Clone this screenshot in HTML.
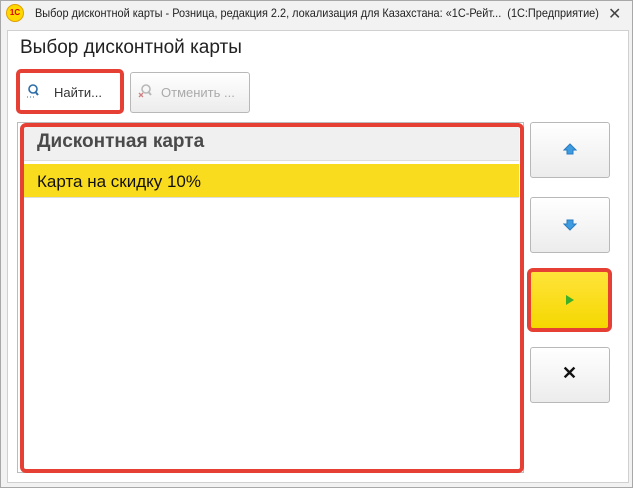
<!DOCTYPE html><html><head><style>
body{margin:0;width:637px;height:489px;background:#fff;position:relative;overflow:hidden;font-family:"Liberation Sans",sans-serif}
.a{position:absolute;box-sizing:border-box;white-space:nowrap}
.btn{background:linear-gradient(#fff,#ececec);border:1px solid #b8b8b8;border-radius:3px}
</style></head><body>
<div class="a" style="left:0;top:0;width:633px;height:488px;background:#f2f2f2;border:1px solid #a8a8a8"></div>
<div class="a" style="left:7px;top:30px;width:622px;height:453px;background:#fff;border:1px solid #d0d0d0"></div>
<div class="a" style="left:6px;top:4px;width:18px;height:18px;border-radius:50%;background:#ffd800;border:1px solid #e0a000;font-size:8px;color:#d00;font-weight:bold;text-align:center;line-height:16px">1С</div>
<div class="a" style="left:35px;top:6px;font-size:12px;color:#222;transform:scaleX(0.91);transform-origin:0 0">Выбор дисконтной карты - Розница, редакция 2.2, локализация для Казахстана: «1С-Рейт...&nbsp; (1С:Предприятие)</div>
<div class="a" style="left:608px;top:4px;font-size:16px;color:#444">✕</div>
<div class="a" style="left:20px;top:37px;font-size:19px;color:#222">Выбор дисконтной карты</div>
<div class="a" style="left:16px;top:69px;width:108px;height:45px;border:4px solid #e64035;border-radius:5px;background:#fff"></div>
<svg class="a" style="left:26px;top:83px" width="14" height="16"><circle cx="7" cy="6" r="4" fill="none" stroke="#2c6da8" stroke-width="1.6"/><path d="M9.5 9L12 12" stroke="#2c6da8" stroke-width="2"/><path d="M1 14h1M4 14h1M7 14h1" stroke="#2c6da8"/></svg>
<div class="a" style="left:54px;top:85px;font-size:13px;color:#333">Найти...</div>
<div class="a btn" style="left:130px;top:72px;width:120px;height:41px"></div>
<svg class="a" style="left:137px;top:83px" width="16" height="16"><circle cx="9" cy="6" r="4" fill="none" stroke="#b8b8b8" stroke-width="1.6"/><path d="M11.5 9L14 12" stroke="#b8b8b8" stroke-width="2"/><path d="M2 10l4 4M6 10l-4 4" stroke="#d08080" stroke-width="1.3"/></svg>
<div class="a" style="left:161px;top:85px;font-size:13px;color:#aaa">Отменить ...</div>
<div class="a" style="left:17px;top:122px;width:507px;height:351px;border:1px solid #bbb"></div>
<div class="a" style="left:24px;top:127px;width:495px;height:34px;background:#f0f0f0;border-bottom:1px solid #ddd"></div>
<div class="a" style="left:37px;top:131px;font-size:19px;font-weight:bold;color:#4a4a4a">Дисконтная карта</div>
<div class="a" style="left:24px;top:164px;width:495px;height:34px;background:#fadc1e;border-bottom:1px solid #ddd"></div>
<div class="a" style="left:37px;top:172px;font-size:17px;color:#111">Карта на скидку 10%</div>
<div class="a" style="left:20px;top:123px;width:504px;height:350px;border:4px solid #e64035;border-radius:6px"></div>
<div class="a btn" style="left:530px;top:122px;width:80px;height:56px"></div>
<svg class="a" style="left:563px;top:143px" width="14" height="12"><path d="M7 1L13 7H10V11H4V7H1Z" fill="#3d9be0" stroke="#2a7bc0"/></svg>
<div class="a btn" style="left:530px;top:197px;width:80px;height:56px"></div>
<svg class="a" style="left:563px;top:219px" width="14" height="12"><path d="M7 11L13 5H10V1H4V5H1Z" fill="#3d9be0" stroke="#2a7bc0"/></svg>
<div class="a" style="left:527px;top:268px;width:85px;height:64px;border:4px solid #e64035;border-radius:6px;background:linear-gradient(#ffe33a,#f5d800)"></div>
<svg class="a" style="left:565px;top:294px" width="10" height="12"><path d="M1 1L9 6L1 11Z" fill="#3db02a"/></svg>
<div class="a btn" style="left:530px;top:347px;width:80px;height:56px"></div>
<div class="a" style="left:562px;top:363px;font-size:18px;font-weight:bold;color:#111">✕</div>
</body></html>
